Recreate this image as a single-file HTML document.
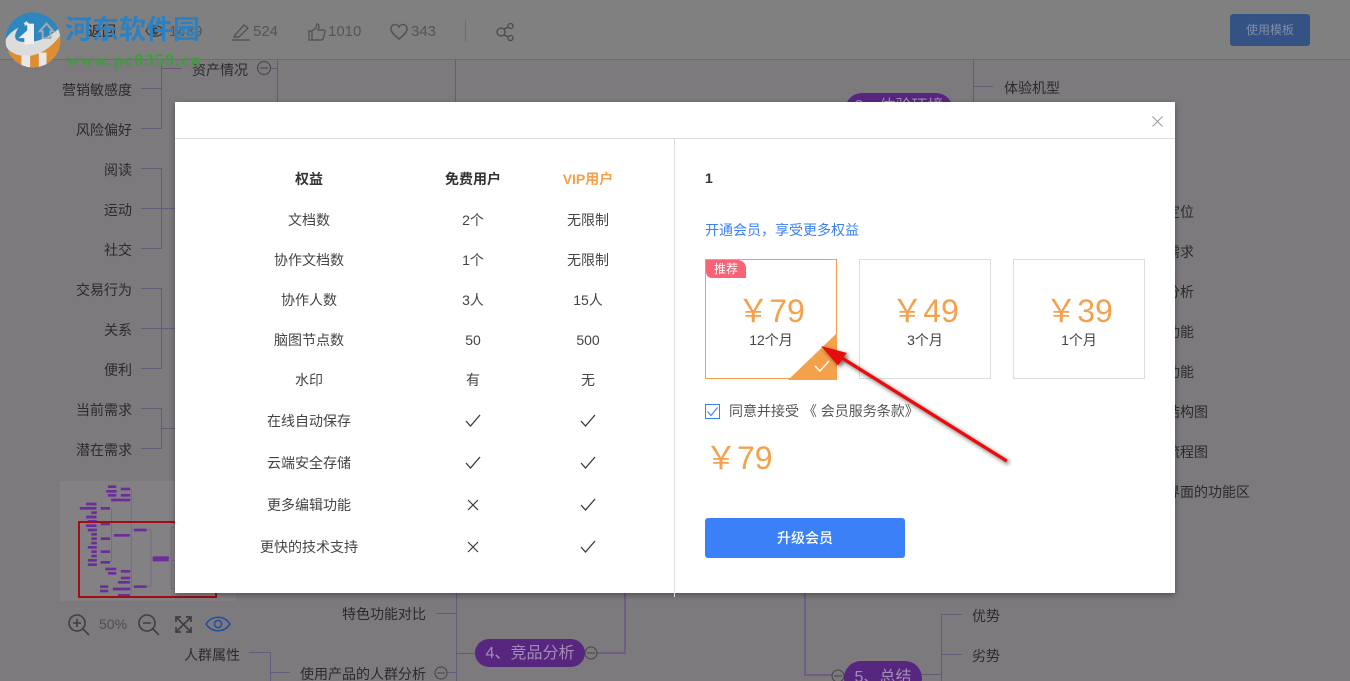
<!DOCTYPE html>
<html lang="zh"><head><meta charset="utf-8"><title>模板</title>
<style>
html,body{margin:0;padding:0;width:1350px;height:681px;overflow:hidden}
body{font:14px/20px "Liberation Sans","Noto Sans CJK SC",sans-serif;color:#2b2a2c}
#root{position:absolute;left:0;top:0;width:1350px;height:681px;overflow:hidden;background:#7d7a7e}
div,span{box-sizing:border-box}
.a{position:absolute}
.t{position:absolute;white-space:nowrap;height:20px;line-height:20px}
.r{width:120px;text-align:right}
.c{width:160px;text-align:center;color:#444}
.n{font-size:15px;color:#555}
.l{position:absolute;background:#675a78}
.h{height:1px}.v{width:1px}
.pill{position:absolute;background:#57277f;color:#a58cb8;border-radius:17px;text-align:center;font-size:16px;line-height:28px}
.card{position:absolute;top:259px;width:132px;height:120px;border:1px solid #ddd;background:#fff;text-align:center}
.p{position:absolute;left:0;right:0;top:31px;font-size:32px;line-height:40px;color:#f5a14c;white-space:nowrap}
.m{position:absolute;left:0;right:0;top:70px;line-height:20px;color:#444}
svg{position:absolute;overflow:visible}
</style></head><body><div id="root">

<!-- mind map background lines -->
<div class="l v" style="left:161px;top:60px;height:69px"></div>
<div class="l h" style="left:161px;top:68px;width:21px"></div>
<div class="l h" style="left:141px;top:88px;width:20px"></div>
<div class="l h" style="left:141px;top:128px;width:20px"></div>
<div class="l v" style="left:277px;top:60px;height:42px"></div>
<div class="l h" style="left:270px;top:68px;width:7px"></div>
<div class="l v" style="left:455px;top:60px;height:42px"></div>
<div class="l v" style="left:973px;top:60px;height:42px"></div>
<div class="l h" style="left:973px;top:86px;width:20px"></div>

<div class="l h" style="left:141px;top:168px;width:20px"></div>
<div class="l h" style="left:141px;top:208px;width:34px"></div>
<div class="l h" style="left:141px;top:248px;width:20px"></div>
<div class="l v" style="left:161px;top:168px;height:81px"></div>
<div class="l h" style="left:141px;top:288px;width:20px"></div>
<div class="l h" style="left:141px;top:328px;width:34px"></div>
<div class="l h" style="left:141px;top:368px;width:20px"></div>
<div class="l v" style="left:161px;top:288px;height:81px"></div>
<div class="l h" style="left:141px;top:408px;width:20px"></div>
<div class="l h" style="left:141px;top:448px;width:20px"></div>
<div class="l h" style="left:161px;top:428px;width:14px"></div>
<div class="l v" style="left:161px;top:408px;height:41px"></div>

<div class="t r" style="left:12px;top:80px">营销敏感度</div>
<div class="t r" style="left:12px;top:120px">风险偏好</div>
<div class="t r" style="left:12px;top:160px">阅读</div>
<div class="t r" style="left:12px;top:200px">运动</div>
<div class="t r" style="left:12px;top:240px">社交</div>
<div class="t r" style="left:12px;top:280px">交易行为</div>
<div class="t r" style="left:12px;top:320px">关系</div>
<div class="t r" style="left:12px;top:360px">便利</div>
<div class="t r" style="left:12px;top:400px">当前需求</div>
<div class="t r" style="left:12px;top:440px">潜在需求</div>
<div class="t" style="left:192px;top:60px">资产情况</div>
<svg style="left:257px;top:61px" width="14" height="14"><circle cx="7" cy="7" r="6.5" fill="none" stroke="#444"/><path d="M3 7h8" stroke="#444"/></svg>
<div class="t" style="left:1004px;top:78px">体验机型</div>
<div class="pill" style="left:845px;top:93px;width:108px;height:34px">3、体验环境</div>
<div class="t r" style="left:1074px;top:202px">定位</div>
<div class="t r" style="left:1074px;top:242px">需求</div>
<div class="t r" style="left:1074px;top:282px">分析</div>
<div class="t r" style="left:1074px;top:322px">功能</div>
<div class="t r" style="left:1074px;top:362px">功能</div>
<div class="t r" style="left:1088px;top:402px">结构图</div>
<div class="t r" style="left:1088px;top:442px">流程图</div>
<div class="t r" style="left:1130px;top:482px">界面的功能区</div>

<!-- bottom tree -->
<div class="a" style="left:624px;top:593px;width:2px;height:61px;background:#6f5d85"></div>
<div class="a" style="left:597px;top:652px;width:29px;height:2px;background:#6f5d85"></div>
<div class="l v" style="left:456px;top:593px;height:88px"></div>
<div class="l h" style="left:436px;top:613px;width:20px"></div>
<div class="l h" style="left:456px;top:653px;width:20px"></div>
<div class="l h" style="left:447px;top:672px;width:9px"></div>
<div class="t r" style="left:306px;top:604px">特色功能对比</div>
<div class="pill" style="left:475px;top:639px;width:110px;height:28px;line-height:30px">4、竞品分析</div>
<svg style="left:584px;top:646px" width="14" height="14"><circle cx="7" cy="7" r="6" fill="none" stroke="#444"/><path d="M3 7h8" stroke="#444"/></svg>
<svg style="left:434px;top:666px" width="14" height="14"><circle cx="7" cy="7" r="6" fill="none" stroke="#444"/><path d="M3 7h8" stroke="#444"/></svg>
<div class="t" style="left:184px;top:645px">人群属性</div>
<div class="l h" style="left:249px;top:652px;width:21px"></div>
<div class="l v" style="left:270px;top:652px;height:29px"></div>
<div class="l h" style="left:270px;top:672px;width:20px"></div>
<div class="t" style="left:300px;top:664px">使用产品的人群分析</div>
<div class="a" style="left:804px;top:593px;width:2px;height:83px;background:#6f5d85"></div>
<div class="a" style="left:804px;top:674px;width:28px;height:2px;background:#6f5d85"></div>
<svg style="left:831px;top:669px" width="14" height="14"><circle cx="7" cy="7" r="6" fill="none" stroke="#444"/><path d="M3 7h8" stroke="#444"/></svg>
<div class="pill" style="left:844px;top:661px;width:78px;height:34px;line-height:33px">5、总结</div>
<div class="l h" style="left:922px;top:674px;width:20px"></div>
<div class="l v" style="left:941px;top:614px;height:67px"></div>
<div class="l h" style="left:941px;top:614px;width:21px"></div>
<div class="l h" style="left:941px;top:654px;width:21px"></div>
<div class="t" style="left:972px;top:606px">优势</div>
<div class="t" style="left:972px;top:646px">劣势</div>

<!-- minimap -->
<div class="a" style="left:60px;top:481px;width:176px;height:120px;background:#848185"></div>
<svg style="left:60px;top:478px" width="180" height="125" viewBox="0 0 518 375" preserveAspectRatio="none">
<g fill="none" stroke="#716a7c" stroke-width="2.5"><path d="M205 32V350M148 90V252M262 155V325M320 148V332M213 155H262M213 325H262M262 240H320M320 148H333M320 247H333M320 332H333M205 155H213M205 325H213"/></g>
<g fill="#6a2d9a"><rect x="138" y="22" width="24" height="8"/><rect x="175" y="29" width="27" height="8"/><rect x="133" y="36" width="30" height="8"/><rect x="138" y="48" width="24" height="8"/><rect x="175" y="48" width="27" height="8"/><rect x="147" y="62" width="55" height="8"/><rect x="75" y="74" width="30" height="8"/><rect x="57" y="87" width="48" height="8"/><rect x="117" y="87" width="27" height="8"/><rect x="90" y="100" width="16" height="8"/><rect x="75" y="113" width="30" height="8"/><rect x="80" y="126" width="26" height="8"/><rect x="75" y="139" width="30" height="8"/><rect x="117" y="134" width="27" height="8"/><rect x="80" y="152" width="26" height="8"/><rect x="90" y="165" width="16" height="8"/><rect x="90" y="178" width="16" height="8"/><rect x="117" y="178" width="27" height="8"/><rect x="155" y="168" width="46" height="8"/><rect x="90" y="191" width="16" height="8"/><rect x="80" y="204" width="26" height="8"/><rect x="90" y="217" width="16" height="8"/><rect x="117" y="217" width="27" height="8"/><rect x="90" y="230" width="16" height="8"/><rect x="80" y="243" width="26" height="8"/><rect x="117" y="249" width="27" height="8"/><rect x="80" y="256" width="26" height="8"/><rect x="130" y="269" width="32" height="8"/><rect x="175" y="276" width="27" height="8"/><rect x="138" y="282" width="24" height="8"/><rect x="175" y="296" width="27" height="8"/><rect x="167" y="309" width="34" height="8"/><rect x="115" y="322" width="24" height="8"/><rect x="152" y="329" width="50" height="8"/><rect x="115" y="335" width="24" height="8"/><rect x="213" y="152" width="36" height="8"/><rect x="213" y="322" width="36" height="8"/><rect x="167" y="348" width="34" height="8"/><rect x="267" y="235" width="46" height="8"/><rect x="267" y="242" width="46" height="8"/><rect x="333" y="145" width="14" height="8"/><rect x="333" y="244" width="14" height="8"/><rect x="333" y="329" width="14" height="8"/></g>
</svg>
<div class="a" style="left:79px;top:522px;width:137px;height:75px;border:1px solid #a30d12;outline:.5px solid #a30d12"></div>

<!-- zoom tools -->
<svg style="left:66px;top:612px" width="24" height="24" fill="none" stroke="#3f3f42" stroke-width="1.6"><circle cx="11" cy="11" r="8"/><path d="M17 17l6 6M7 11h8M11 7v8"/></svg>
<div class="t" style="left:99px;top:614px;color:#4f4e50">50%</div>
<svg style="left:136px;top:612px" width="24" height="24" fill="none" stroke="#3f3f42" stroke-width="1.6"><circle cx="11" cy="11" r="8"/><path d="M17 17l6 6M7 11h8"/></svg>
<svg style="left:175px;top:616px" width="17" height="17" fill="none" stroke="#3f3f42" stroke-width="1.7"><path d="M1 6V1h5M11 1h5v5M16 11v5h-5M6 16H1v-5M2 2l13 13M15 2L2 15"/></svg>
<svg style="left:205px;top:615px" width="26" height="18" fill="none" stroke="#24519f" stroke-width="1.6"><path d="M1 9C7 0 19 0 25 9C19 18 7 18 1 9Z"/><circle cx="13" cy="9" r="3.6"/></svg>

<!-- top bar -->
<div class="a" style="left:0;top:0;width:1350px;height:60px;background:#808080;border-bottom:1px solid #6d6b70"></div>
<svg style="left:40px;top:24px" width="16" height="16" fill="none" stroke="#666" stroke-width="1.3"><path d="M2 15V6l6-5 6 5v9H10V9H6v6Z"/></svg>
<div class="t" style="left:88px;top:21px;color:#222">返回</div>
<svg style="left:145px;top:23px" width="20" height="16" fill="none" stroke="#444" stroke-width="1.4"><path d="M1 8C5 1 15 1 19 8C15 15 5 15 1 8Z"/><circle cx="10" cy="8" r="3" fill="#444"/></svg>
<div class="t n" style="left:169px;top:22px">1439</div>
<svg style="left:232px;top:23px" width="18" height="18" fill="none" stroke="#555" stroke-width="1.4"><path d="M3 12L12 2l4 3-9 9-5 0ZM0 17h18"/></svg>
<div class="t n" style="left:253px;top:22px">524</div>
<svg style="left:308px;top:23px" width="18" height="18" fill="none" stroke="#555" stroke-width="1.4"><path d="M1 8h3v9H1ZM4 8l4-3 1-4c2 0 2 2 2 3l-1 3h6c1 0 1 1 1 2l-2 7c0 1-1 1-2 1H4"/></svg>
<div class="t n" style="left:328px;top:22px">1010</div>
<svg style="left:390px;top:23px" width="18" height="17" fill="none" stroke="#555" stroke-width="1.6"><path d="M9 16C4 12 1 9 1 6c0-5 6-6 8-2 2-4 8-3 8 2 0 3-3 6-8 10Z"/></svg>
<div class="t n" style="left:411px;top:22px">343</div>
<div class="a" style="left:465px;top:20px;width:1px;height:22px;background:#6d6d6d"></div>
<svg style="left:496px;top:22px" width="18" height="20" fill="none" stroke="#4b4b4b" stroke-width="1.3"><circle cx="5" cy="10" r="4"/><circle cx="14.500" cy="4" r="2.500"/><circle cx="14.500" cy="16" r="2.500"/><path d="M8 7l4.500-2M8 13l4.500 2"/></svg>
<div class="a" style="left:1230px;top:14px;width:80px;height:32px;background:#345284;border-radius:3px;color:#808ea8;font-size:12px;line-height:32px;text-align:center">使用模板</div>

<!-- watermark -->
<svg style="left:5px;top:12px" width="56" height="56" viewBox="0 0 58 58">
<defs><clipPath id="cc"><circle cx="29" cy="29" r="28.500"/></clipPath></defs>
<g clip-path="url(#cc)">
<rect width="58" height="58" fill="#2d86bd"/>
<path d="M0 38C20 50 45 36 58 20V58H0Z" fill="#df8d33"/>
<path d="M1 28C-1 38 5 41 12 44C30 50 48 38 58 23L56 17C45 27 30 33 18 31C10 30 8 26 14 16C7 20 3 24 1 28Z" fill="#dcdcdc"/>
<rect x="17" y="45" width="9" height="13" fill="#e8e8e8"/><rect x="35" y="42" width="8" height="16" fill="#e8e8e8"/>
</g>
<path d="M14 27L23 19V12H30V33L20 34V27Z" fill="#f0f0f0"/>
<path d="M36 20L43 12L50 20H47V27H39V20Z" fill="none" stroke="#a9a9a9" stroke-width="2"/>
<path d="M22 9l1 2 2 0-1.500 1.500.5 2-2-1-2 1 .5-2L19 11l2 0Z" fill="#eee"/>
</svg>
<div class="t" style="left:65px;top:13px;height:34px;line-height:34px;font-size:27px;font-weight:700;color:#2a82c6">河东软件园</div>
<div class="t" style="left:66px;top:50px;font:700 18px/20px 'Liberation Serif',serif;color:#3d9e3a;letter-spacing:1.300px">www.pc0359.cn</div>

<!-- modal -->
<div class="a" style="left:175px;top:102px;width:1000px;height:491px;background:#fff;box-shadow:0 2px 6px rgba(0,0,0,.35)"></div>
<div class="a" style="left:175px;top:138px;width:1000px;height:1px;background:#ddd"></div>
<div class="a" style="left:674px;top:138px;width:1px;height:459px;background:#ddd"></div>
<svg style="left:1152px;top:116px" width="11" height="11" stroke="#999" stroke-width="1"><path d="M.5.5l10 10M10.500.5l-10 10"/></svg>

<div class="t c" style="left:229px;top:169px;font-weight:700;color:#333">权益</div>
<div class="t c" style="left:393px;top:169px;font-weight:700;color:#333">免费用户</div>
<div class="t c" style="left:508px;top:169px;font-weight:700;color:#f5a14c">VIP用户</div>

<div class="t c" style="left:229px;top:210px">文档数</div><div class="t c" style="left:393px;top:210px">2个</div><div class="t c" style="left:508px;top:210px">无限制</div>
<div class="t c" style="left:229px;top:250px">协作文档数</div><div class="t c" style="left:393px;top:250px">1个</div><div class="t c" style="left:508px;top:250px">无限制</div>
<div class="t c" style="left:229px;top:290px">协作人数</div><div class="t c" style="left:393px;top:290px">3人</div><div class="t c" style="left:508px;top:290px">15人</div>
<div class="t c" style="left:229px;top:330px">脑图节点数</div><div class="t c" style="left:393px;top:330px">50</div><div class="t c" style="left:508px;top:330px">500</div>
<div class="t c" style="left:229px;top:370px">水印</div><div class="t c" style="left:393px;top:370px">有</div><div class="t c" style="left:508px;top:370px">无</div>
<div class="t c" style="left:229px;top:411px">在线自动保存</div>
<div class="t c" style="left:229px;top:453px">云端安全存储</div>
<div class="t c" style="left:229px;top:495px">更多编辑功能</div>
<div class="t c" style="left:229px;top:537px">更快的技术支持</div>
<svg style="left:465px;top:414px" width="16" height="14" fill="none" stroke="#3a3a3a" stroke-width="1.300"><path d="M1 7l4.500 5L15 1"/></svg>
<svg style="left:580px;top:414px" width="16" height="14" fill="none" stroke="#3a3a3a" stroke-width="1.300"><path d="M1 7l4.500 5L15 1"/></svg>
<svg style="left:465px;top:456px" width="16" height="14" fill="none" stroke="#3a3a3a" stroke-width="1.300"><path d="M1 7l4.500 5L15 1"/></svg>
<svg style="left:580px;top:456px" width="16" height="14" fill="none" stroke="#3a3a3a" stroke-width="1.300"><path d="M1 7l4.500 5L15 1"/></svg>
<svg style="left:467px;top:499px" width="12" height="12" fill="none" stroke="#3a3a3a" stroke-width="1.200"><path d="M1 1l10 10M11 1L1 11"/></svg>
<svg style="left:580px;top:498px" width="16" height="14" fill="none" stroke="#3a3a3a" stroke-width="1.300"><path d="M1 7l4.500 5L15 1"/></svg>
<svg style="left:467px;top:541px" width="12" height="12" fill="none" stroke="#3a3a3a" stroke-width="1.200"><path d="M1 1l10 10M11 1L1 11"/></svg>
<svg style="left:580px;top:540px" width="16" height="14" fill="none" stroke="#3a3a3a" stroke-width="1.300"><path d="M1 7l4.500 5L15 1"/></svg>

<div class="t" style="left:705px;top:168px;font-weight:700;color:#333">1</div>
<div class="t" style="left:705px;top:220px;color:#3a80f0">开通会员，享受更多权益</div>

<div class="card" style="left:705px;border-color:#f5a14c"><div class="p">￥79</div><div class="m">12个月</div></div>
<div class="a" style="left:706px;top:260px;width:40px;height:18px;background:#f96378;border-radius:0 8px 0 6px;color:#fff;font-size:12px;line-height:18px;text-align:center">推荐</div>
<svg style="left:788px;top:333px" width="49" height="47"><path d="M0 47L49 0V47Z" fill="#f5a14c"/><path d="M27 33l5 5 9-10" fill="none" stroke="#fff" stroke-width="1.400"/></svg>
<div class="card" style="left:859px"><div class="p">￥49</div><div class="m">3个月</div></div>
<div class="card" style="left:1013px"><div class="p">￥39</div><div class="m">1个月</div></div>

<div class="a" style="left:705px;top:404px;width:15px;height:15px;border:1px solid #3a80f0"></div>
<svg style="left:707px;top:407px" width="11" height="10" fill="none" stroke="#3a80f0" stroke-width="1.100"><path d="M.5 4.500l3.500 4L10.500.5"/></svg>
<div class="t" style="left:729px;top:401px;color:#555">同意并接受 《 会员服务条款》</div>
<div class="t" style="left:705px;top:438px;height:40px;line-height:40px;font-size:32px;color:#f5a14c">￥79</div>
<div class="a" style="left:705px;top:518px;width:200px;height:40px;background:#3b80f7;border-radius:3px;color:#fff;line-height:41px;text-align:center;font-weight:500">升级会员</div>

<!-- arrow -->
<svg style="left:0;top:0" width="1350" height="681">
<defs><filter id="s" x="-10%" y="-10%" width="120%" height="120%"><feDropShadow dx="2" dy="2" stdDeviation="2" flood-color="#000" flood-opacity=".6"/></filter></defs>
<path d="M1007.500 459.500L1006 462.500L842 360L838 365.500L821 346L847 353L843.500 357Z" fill="#e8090b" filter="url(#s)"/>
</svg>
</div></body></html>
